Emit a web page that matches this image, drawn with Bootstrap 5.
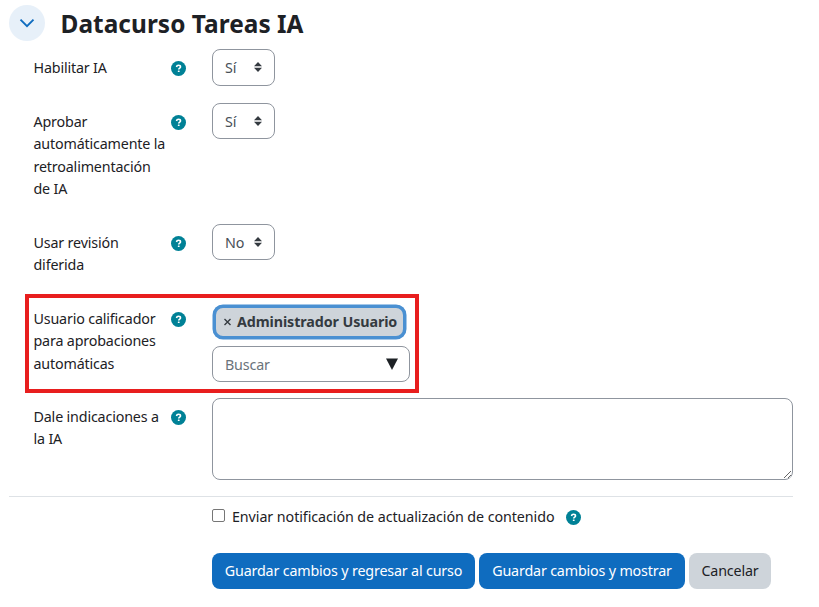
<!DOCTYPE html>
<html lang="es">
<head>
<meta charset="utf-8">
<meta name="viewport" content="width=device-width, initial-scale=1">
<title>Datacurso Tareas IA</title>
<link href="https://cdn.jsdelivr.net/npm/bootstrap@5.3.0/dist/css/bootstrap.min.css" rel="stylesheet">
<style>
  body { font: 400 14.3px/22.5px "Segoe UI", "Noto Sans", sans-serif; letter-spacing: -.17px; color: #1d2125; background: #fff; overflow: hidden; }
  .settings { width: 793px; padding-left: 9px; padding-top: 5px; }
  .section-head { height: 44px; }
  .toggle-btn { width: 36px; height: 36px; background: #e7f0f9; border: 0; color: #0f6cbf; }
  h3 { font-size: 24.4px; line-height: 30px; font-weight: 700; letter-spacing: .05px; margin: 3.5px 0 0 15.5px; }
  .field { display: grid; grid-template-columns: 137px 41px 1fr; padding-left: 25px; }
  .field-label { padding-top: 7.5px; margin-left: -.5px; white-space: nowrap; }
  .help { width: 15px; height: 15px; display: block; }
  .field > .help { margin-top: 12px; }
  .r1 { min-height: 54px; } .r2 { min-height: 121px; } .r3 { min-height: 76px; }
  .r4 { min-height: 98px; } .r5 { min-height: 98px; }
  .form-control, .form-select { font-size: 14.3px; line-height: 22.5px; height: 36px; border-color: #8f959e; border-radius: 8px; color: #495057; padding: 6px 12px; letter-spacing: inherit; }
  .form-select { width: 63px; background-image: none; padding-top: 7px; padding-right: 0; }
  .r1 .form-select { height: 37px; }
  .pick svg { right: 12px; top: 12px; }
  .form-control::placeholder { color: #6a737b; }
  textarea.form-control { height: 82px; }
  .highlight { left: 16px; top: -6px; width: 394px; height: 99px; border: 4px solid #e81e1e; pointer-events: none; }
  .chip { width: 193px; height: 34px; margin: 5px 0 0 1px; border-radius: 10px; background: #ced4da; border: 3px solid #4a90d2; box-shadow: 0 0 0 .5px #4a90d2; font-weight: 700; letter-spacing: -.1px; color: #343a40; padding-left: 7px; }
  .chip-name { white-space: nowrap; }
  .search { width: 198px; margin-top: 7px; }
  .search svg { right: 12px; top: 12px; }
  .divider { height: 1px; background: #dee2e6; }
  .notice { padding: 9px 0 0 203px; letter-spacing: -.08px; }
  .notice .help { margin: 0 0 0 11px; }
  .form-check-input { width: 13px; height: 13px; border: 1px solid #767676; margin: 0 7px 3px 0; }
  .form-check-input[type=checkbox] { border-radius: 2px; }
  .actions { gap: 4px; padding: 24px 0 0 203px; }
  .actions .btn { height: 36px; font-size: 14.3px; line-height: 22.5px; padding: 7px 0 5px; border-radius: 8px; letter-spacing: inherit; border: 0; white-space: nowrap; }
  .btn-save { background: #0f6cbf; color: #fff; } .btn-quit { background: #ced4da; color: #1d2125; }
  .w1 { width: 263px; } .w2 { width: 206px; } .w3 { width: 82px; }
</style>
<script src="https://cdn.jsdelivr.net/npm/bootstrap@5.3.0/dist/js/bootstrap.bundle.min.js"></script>
</head>
<body>
<svg width="0" height="0" class="position-absolute" aria-hidden="true">
  <symbol id="help" viewBox="0 0 15 15"><circle cx="7.5" cy="7.5" r="7.5" fill="#008196"/><path d="M5.5 6C5.700 4.800 6.400 4.300 7.500 4.300c1.200 0 2 .6 2 1.600 0 1.300-1.800 1.200-1.800 2.600" fill="none" stroke="#fff" stroke-width="1.6"/><rect x="6.800" y="9.400" width="1.800" height="1.700" rx=".5" fill="#fff"/></symbol>
  <symbol id="updown" viewBox="0 0 8 10"><path d="M4 0 8 4.200H0zM4 10 0 5.800h8z" fill="#343a40"/></symbol>
</svg>
<main class="settings">
  <div class="section-head d-flex align-items-start">
    <button class="toggle-btn rounded-circle p-0 d-flex align-items-center justify-content-center" aria-label="Contraer">
      <svg width="16" height="10" viewBox="0 0 16 10"><path d="M1.500 1.700 8 8.200l6.500-6.500" fill="none" stroke="currentColor" stroke-width="1.900"/></svg>
    </button>
    <h3>Datacurso Tareas IA</h3>
  </div>
  <div class="field r1">
    <div class="field-label">Habilitar IA</div><svg class="help"><use href="#help"/></svg>
    <div><div class="pick position-relative form-select">Sí<svg class="position-absolute" width="8" height="10"><use href="#updown"/></svg></div></div>
  </div>
  <div class="field r2">
    <div class="field-label">Aprobar<br>automáticamente la<br>retroalimentación<br>de IA</div><svg class="help"><use href="#help"/></svg>
    <div><div class="pick position-relative form-select">Sí<svg class="position-absolute" width="8" height="10"><use href="#updown"/></svg></div></div>
  </div>
  <div class="field r3">
    <div class="field-label">Usar revisión<br>diferida</div><svg class="help"><use href="#help"/></svg>
    <div><div class="pick position-relative form-select">No<svg class="position-absolute" width="8" height="10"><use href="#updown"/></svg></div></div>
  </div>
  <div class="field r4 position-relative">
    <div class="highlight position-absolute"></div>
    <div class="field-label">Usuario calificador<br>para aprobaciones<br>automáticas</div><svg class="help"><use href="#help"/></svg>
    <div>
      <div class="chip d-flex align-items-center">
        <svg class="me-1" width="10" height="8" viewBox="0 0 10 8"><path d="m1.500 1 6 6M7.500 1l-6 6" stroke="currentColor" stroke-width="1.400"/></svg>
        <span class="chip-name">Administrador Usuario</span>
      </div>
      <div class="search position-relative">
        <input class="form-control" placeholder="Buscar">
        <svg class="position-absolute" width="12" height="12" viewBox="0 0 12 12"><path d="M0 .5h12L6 12z" fill="#1d2125"/></svg>
      </div>
    </div>
  </div>
  <div class="field r5">
    <div class="field-label">Dale indicaciones a<br>la IA</div><svg class="help"><use href="#help"/></svg>
    <div><textarea class="form-control" aria-label="Dale indicaciones a la IA"></textarea></div>
  </div>
  <div class="divider"></div>
  <div class="notice d-flex align-items-center">
    <input class="form-check-input" type="checkbox" id="notify"><label for="notify">Enviar notificación de actualización de contenido</label>
    <svg class="help"><use href="#help"/></svg>
  </div>
  <div class="actions d-flex">
    <button class="btn btn-save w1">Guardar cambios y regresar al curso</button>
    <button class="btn btn-save w2">Guardar cambios y mostrar</button>
    <button class="btn btn-quit w3">Cancelar</button>
  </div>
</main>
</body>
</html>
